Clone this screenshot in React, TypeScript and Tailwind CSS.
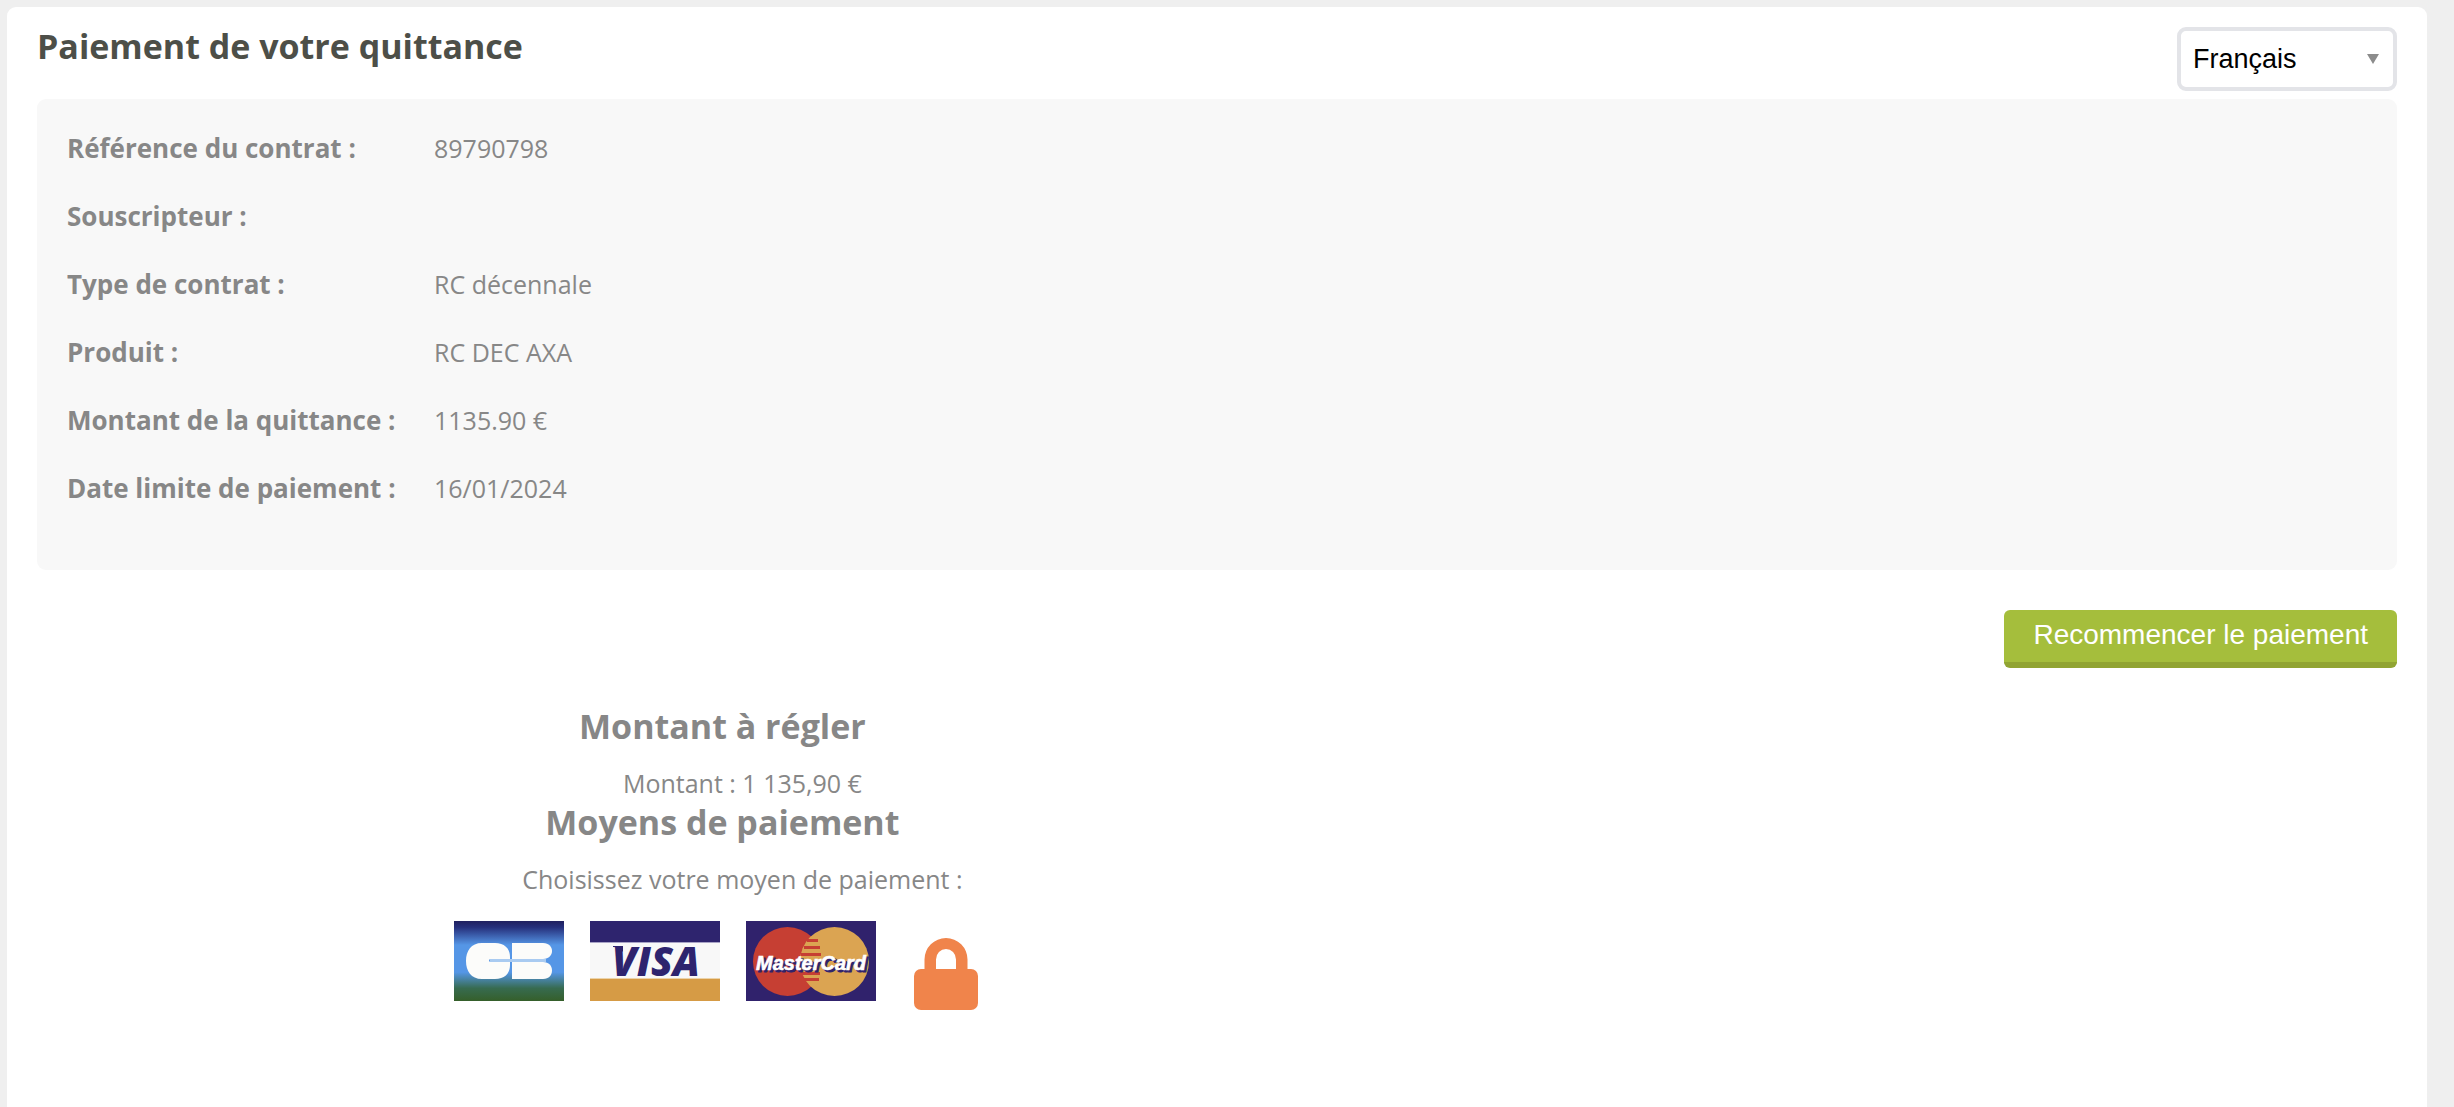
import { useState } from 'react';

const details = [
  { label: 'Référence du contrat :', value: '89790798' },
  { label: 'Souscripteur :', value: '' },
  { label: 'Type de contrat :', value: 'RC décennale' },
  { label: 'Produit :', value: 'RC DEC AXA' },
  { label: 'Montant de la quittance :', value: '1135.90 €' },
  { label: 'Date limite de paiement :', value: '16/01/2024' },
];

function CbLogo() {
  return (
    <svg viewBox="0 0 110 80" className="block h-20 w-[110px]" aria-hidden="true">
      <defs>
        <linearGradient id="cb-sky" x1="0" y1="0" x2="0" y2="1">
          <stop offset="0" stopColor="#20205f" />
          <stop offset="0.08" stopColor="#26307c" />
          <stop offset="0.3" stopColor="#5596e6" />
          <stop offset="0.64" stopColor="#5596e6" />
          <stop offset="0.84" stopColor="#376b50" />
          <stop offset="1" stopColor="#355f2a" />
        </linearGradient>
      </defs>
      <rect width="110" height="80" fill="url(#cb-sky)" />
      <path
        d="M28 22H41C50 22 56 27 56 36V38H36Q34 39.500 36 41H56V44C56 53 50 58 41 58H28C17 58 12 50 12 40S17 22 28 22Z"
        fill="#fcfcfa"
      />
      <path d="M58 22H89C95 22 98 26 98 30S95 38 89 38H58Z" fill="#fcfcfa" />
      <path d="M58 41H89C95 41 98 45 98 49.500S95 58 89 58H58Z" fill="#fcfcfa" />
      <rect x="36" y="38" width="56" height="3" fill="#a9cbf1" />
    </svg>
  );
}

function VisaLogo() {
  return (
    <svg viewBox="0 0 130 80" className="block h-20 w-[130px]" aria-hidden="true">
      <rect width="130" height="80" fill="#f8f8f8" />
      <rect width="130" height="21" fill="#2e246e" />
      <rect y="21" width="130" height="1" fill="#a9a4c6" />
      <rect y="57" width="130" height="1" fill="#ecd3a9" />
      <rect y="58" width="130" height="22" fill="#d69b45" />
      <path d="M23 25H33V31Q29 26 23 26Z" fill="#2e246e" />
      <text
        x="66"
        y="55"
        textAnchor="middle"
        fill="#2e246e"
        className="font-['Open_Sans',sans-serif] text-[40px] font-extrabold italic"
      >
        VISA
      </text>
    </svg>
  );
}

function MasterCardLogo() {
  return (
    <svg viewBox="0 0 130 80" className="block h-20 w-[130px]" aria-hidden="true">
      <rect width="130" height="80" fill="#30226c" />
      <circle cx="41.500" cy="40.500" r="34.500" fill="#c63f33" />
      <circle cx="88.500" cy="40.500" r="34.500" fill="#dba452" />
      <path
        d="M61 18H72V21H61ZM58 25H74V28H58ZM55 32H75V35H55ZM55 51H74V54H55ZM57 57H73V60H57Z"
        fill="#c63f33"
      />
      <g className="font-['Liberation_Sans',Arial,sans-serif] text-[20px] font-bold italic">
        <text x="67" y="51" textAnchor="middle" fill="#30226c" stroke="#30226c" aria-hidden="true">
          MasterCard
        </text>
        <text x="65" y="49" textAnchor="middle" fill="#ffffff" stroke="#ffffff" strokeWidth="0.600">
          MasterCard
        </text>
      </g>
    </svg>
  );
}

function LockIcon() {
  return (
    <svg viewBox="0 0 64 72" className="block h-[72px] w-16" fill="#f0844b" aria-hidden="true">
      <rect y="31" width="64" height="41" rx="7" />
      <path d="M10.500 32V21.500a21.500 21.500 0 0 1 43 0V32H42V21.500a10 10.500 0 0 0 -20 0V32Z" />
    </svg>
  );
}

const methods = [
  { name: 'Carte Bancaire', Logo: CbLogo },
  { name: 'Visa', Logo: VisaLogo },
  { name: 'MasterCard', Logo: MasterCardLogo },
];

export default function App() {
  const [language, setLanguage] = useState('fr');

  return (
    <div className="flex min-h-screen flex-col bg-[#efefef] pt-[7px] pr-[27px] pl-[7px] font-['Open_Sans',sans-serif] text-[25px] leading-8 text-[#878787]">
      <main className="grow rounded-t-[9px] bg-white px-[30px] pt-5">
        {/* Header */}
        <header className="mb-2 flex items-start justify-between">
          <h1 className="text-[34px] leading-[38px] font-bold text-[#4d4f48]">Paiement de votre quittance</h1>
          <div className="relative w-[220px]">
            <select
              aria-label="Langue"
              value={language}
              onChange={(e) => setLanguage(e.target.value)}
              className="block h-16 w-full appearance-none rounded-[9px] border-4 border-[#e3e4e8] bg-white px-3 pb-px font-['Liberation_Sans',Arial,sans-serif] text-[27px] text-black"
            >
              <option value="fr">Français</option>
              <option value="en">English</option>
            </select>
            <svg
              viewBox="0 0 12 10"
              className="pointer-events-none absolute top-[27px] right-[18px] h-[10px] w-3"
              fill="#8c8c8c"
              aria-hidden="true"
            >
              <path d="M0 0H12L6 10Z" />
            </svg>
          </div>
        </header>

        {/* Contract details */}
        <dl className="rounded-[9px] bg-[#f8f8f8] px-[30px] pt-[15px] pb-12">
          {details.map(({ label, value }) => (
            <div key={label} className="flex h-[68px] items-center">
              <dt className="w-[367px] text-[26px] font-bold">{label}</dt>
              <dd>{value}</dd>
            </div>
          ))}
        </dl>

        <div className="mt-10 flex justify-end">
          <button
            type="button"
            className="h-[58px] rounded-md border-b-6 border-[#91a433] bg-[#a5be3c] px-[29px] pb-0.5 font-['Liberation_Sans',Arial,sans-serif] text-[28px] text-white"
          >
            Recommencer le paiement
          </button>
        </div>

        {/* Payment */}
        <section className="mt-[35px] w-[58%] pl-0.5 text-center">
          <h2 className="text-[34px] leading-[46px] font-bold">Montant à régler</h2>
          <p className="mt-[18px] pl-10">Montant : 1 135,90 €</p>
          <h2 className="text-[34px] leading-[46px] font-bold">Moyens de paiement</h2>
          <p className="mt-[18px] pl-10">Choisissez votre moyen de paiement :</p>
          <div className="mt-[26px] flex items-start justify-center gap-[26px]">
            {methods.map(({ name, Logo }) => (
              <button key={name} type="button" aria-label={name}>
                <Logo />
              </button>
            ))}
            <div className="px-3 pt-[17px]">
              <LockIcon />
            </div>
          </div>
        </section>
      </main>
    </div>
  );
}
